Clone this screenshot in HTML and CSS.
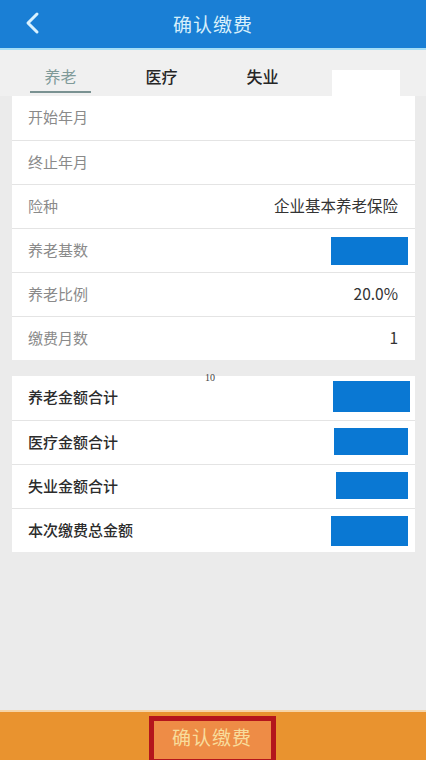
FILE: index.html
```html
<!DOCTYPE html>
<html lang="zh-CN">
<head>
<meta charset="utf-8">
<title>确认缴费</title>
<link rel="stylesheet" href="styles.css">
</head>
<body>
<div class="app">
  <header class="topbar">
    <svg class="back" width="20" height="24" viewBox="0 0 20 24"><polyline points="13,3 4,12 13,21" fill="none" stroke="#d9f2ff" stroke-width="3" stroke-linecap="round" stroke-linejoin="round"/></svg>
    <h1 class="title">确认缴费</h1>
  </header>

  <nav class="tabs">
    <div class="tab active">养老</div>
    <div class="tab">医疗</div>
    <div class="tab">失业</div>
    <div class="tab-blank"></div>
  </nav>

  <section class="card">
    <div class="row"><span class="label">开始年月</span></div>
    <div class="row"><span class="label">终止年月</span></div>
    <div class="row"><span class="label">险种</span><span class="value">企业基本养老保险</span></div>
    <div class="row"><span class="label">养老基数</span><span class="mask mask-a"></span></div>
    <div class="row"><span class="label">养老比例</span><span class="value">20.0%</span></div>
    <div class="row"><span class="label">缴费月数</span><span class="value">1</span></div>
  </section>

  <section class="card card-sum">
    <span class="tiny">10</span>
    <div class="row"><span class="label strong">养老金额合计</span><span class="mask mask-b"></span></div>
    <div class="row"><span class="label strong">医疗金额合计</span><span class="mask mask-c"></span></div>
    <div class="row"><span class="label strong">失业金额合计</span><span class="mask mask-d"></span></div>
    <div class="row"><span class="label strong">本次缴费总金额</span><span class="mask mask-e"></span></div>
  </section>

  <footer class="bottombar">
    <div class="confirm">确认缴费</div>
  </footer>
</div>
</body>
</html>
```

FILE: styles.css
```css
* { box-sizing: border-box; }
html, body { margin: 0; padding: 0; }
body {
  background: #ebebeb;
  font-family: "Noto Sans CJK SC", "Noto Sans", sans-serif;
}
.app {
  width: 426px;
  height: 760px;
  display: flex;
  flex-direction: column;
  overflow: hidden;
}
.topbar {
  height: 50px;
  flex: none;
  background: #1a7fd5;
  border-bottom: 2px solid #a6def6;
  display: flex;
  align-items: center;
  justify-content: center;
  position: relative;
}
.back {
  position: absolute;
  left: 24px;
  top: 11px;
}
.title {
  margin: 0;
  font-size: 19px;
  font-weight: 400;
  color: #d7effb;
  letter-spacing: 1px;
  padding-bottom: 2px;
}
.tabs {
  height: 46px;
  flex: none;
  display: flex;
  align-items: stretch;
  padding-left: 10px;
  background: #f0f0f0;
}
.tab {
  width: 101px;
  display: flex;
  align-items: center;
  justify-content: center;
  font-size: 16px;
  font-weight: 500;
  color: #262626;
  position: relative;
  padding-top: 6px;
}
.tab.active {
  color: #7f9a99;
  font-weight: 400;
}
.tab.active::after {
  content: "";
  position: absolute;
  left: 20px;
  right: 20px;
  bottom: 3px;
  height: 2px;
  background: #7a9292;
}
.tab-blank {
  width: 68px;
  height: 26px;
  margin-left: 19px;
  align-self: flex-end;
  background: #ffffff;
}
.card {
  margin: 0 11px 0 12px;
  background: #ffffff;
  flex: none;
}
.card-sum {
  margin-top: 16px;
  position: relative;
}
.row {
  height: 44px;
  display: flex;
  align-items: center;
  justify-content: space-between;
  padding: 0 17px 3px 16px;
  border-top: 1px solid #e4e4e4;
}
.row:first-child, .card-sum .tiny + .row { border-top: none; }
.label {
  font-size: 15px;
  color: #8a8a8a;
}
.label.strong {
  color: #2c2c2c;
  font-weight: 500;
}
.value {
  font-size: 15.5px;
  color: #333333;
}
.mask {
  display: block;
  background: #0a78d3;
}
.mask-a { width: 77px; height: 28px; margin-right: -10px; margin-top: 3px; }
.mask-b { width: 77px; height: 31px; margin-right: -12px; }
.mask-c { width: 74px; height: 27px; margin-right: -10px; }
.mask-d { width: 72px; height: 27px; margin-right: -10px; }
.mask-e { width: 77px; height: 30px; margin-right: -10px; margin-top: 3px; }
.tiny {
  position: absolute;
  left: 193px;
  top: -4px;
  font-family: "Liberation Serif", serif;
  font-size: 10px;
  color: #444;
}
.bottombar {
  margin-top: auto;
  height: 50px;
  flex: none;
  background: #e9932f;
  border-top: 2px solid #f6d5a8;
  display: flex;
  justify-content: center;
  padding-top: 4px;
}
.confirm {
  width: 127px;
  height: 48px;
  margin-left: -2px;
  border: 5px solid #b4151c;
  background: #ee8c46;
  color: #f8dc9c;
  font-size: 19px;
  display: flex;
  align-items: center;
  justify-content: center;
  padding-bottom: 8px;
  letter-spacing: 1px;
}
```
